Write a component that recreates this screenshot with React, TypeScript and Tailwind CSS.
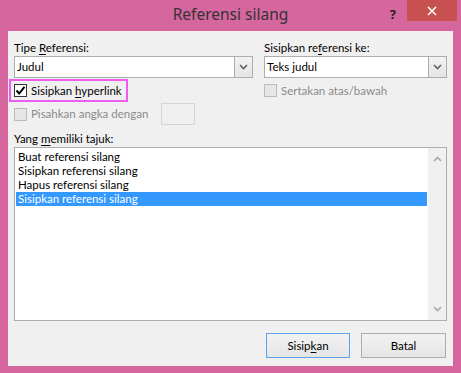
import React from "react";

function Chevron({ up = false, color = "#606060" }: { up?: boolean; color?: string }) {
  return (
    <svg width="9" height="6" viewBox="0 0 9 6" className="block">
      <polyline
        points={up ? "1,5 4.5,1.5 8,5" : "1,1 4.5,4.5 8,1"}
        fill="none"
        stroke={color}
        strokeWidth="1.6"
      />
    </svg>
  );
}

function Combo({ value }: { value: string }) {
  return (
    <div className="flex h-[22px] border border-[#abadb3] bg-white">
      <div className="flex flex-1 items-center pl-[2px] text-black">{value}</div>
      <div className="flex w-[18px] items-center justify-center border-l border-[#acacac] bg-gradient-to-b from-[#f2f2f2] to-[#e5e5e5]">
        <Chevron />
      </div>
    </div>
  );
}

function Box({ checked = false, disabled = false }: { checked?: boolean; disabled?: boolean }) {
  return (
    <div
      className={
        disabled
          ? "h-[13px] w-[13px] shrink-0 border border-[#bcbcbc] bg-[#e6e6e6]"
          : "flex h-[13px] w-[13px] shrink-0 items-center justify-center border border-[#333333] bg-white"
      }
    >
      {checked && (
        <svg width="11" height="11" viewBox="0 0 11 11">
          <polyline points="1.5,5.5 4.2,8.5 9.5,1.8" fill="none" stroke="#000" strokeWidth="2" />
        </svg>
      )}
    </div>
  );
}

const items = [
  "Buat referensi silang",
  "Sisipkan referensi silang",
  "Hapus referensi silang",
  "Sisipkan referensi silang",
];

export default function App() {
  return (
    <div className="relative flex h-[373px] w-[461px] flex-col whitespace-nowrap bg-[#d6669e] px-[8px] pb-[7px] font-['Noto_Sans',sans-serif]">
      {/* title bar */}
      <div className="flex h-[31px] items-center justify-center pb-[1px] text-[15.5px] leading-none text-[#333333]">
        Referensi silang
      </div>
      <div className="absolute right-[65px] top-[5px] text-[13px] font-bold text-[#222]">?</div>
      <div className="absolute right-[4px] top-0 flex h-[21px] w-[50px] items-center justify-center bg-[#c75050]">
        <svg width="10" height="10" viewBox="0 0 10 10">
          <path d="M1 1 L9 9 M9 1 L1 9" stroke="#fff" strokeWidth="1.6" />
        </svg>
      </div>

      {/* client area */}
      <div className="flex flex-1 flex-col bg-[#f0f0f0] px-[6px] pb-[8px] pt-[9px] font-['Lato',sans-serif] text-[11.5px] text-black">
        <div className="flex gap-[11px]">
          <div className="flex w-[239px] flex-col">
            <div className="h-[16px] leading-[16px]">
              Tipe <span className="underline underline-offset-2">R</span>eferensi:
            </div>
            <Combo value="Judul" />
            <div className="-ml-[5px] mt-[1px] flex h-[23px] w-[119px] items-center gap-[4px] border-2 border-[#f05cf0] pl-[3px]">
              <Box checked />
              <span>
                Sisipkan <span className="underline underline-offset-2">h</span>yperlink
              </span>
            </div>
            <div className="mt-[1px] flex h-[22px] items-center">
              <Box disabled />
              <span className="ml-[4px] w-[130px] text-[#8b8b8b]">Pisahkan angka dengan</span>
              <div className="h-[22px] w-[34px] border border-[#d5d5d5] bg-[#f0f0f0]" />
            </div>
          </div>
          <div className="flex w-[183px] flex-col">
            <div className="h-[16px] leading-[16px]">
              Sisipkan re<span className="underline underline-offset-2">f</span>erensi ke:
            </div>
            <Combo value="Teks judul" />
            <div className="mt-[1px] flex h-[23px] items-center gap-[4px]">
              <Box disabled />
              <span className="text-[#8b8b8b]">Sertakan atas/bawah</span>
            </div>
          </div>
        </div>

        <div className="mt-[6px] h-[16px] leading-[16px]">
          Yang <span className="underline underline-offset-2">m</span>emiliki tajuk:
        </div>
        <div className="flex h-[174px] border border-[#abadb3] bg-white">
          <div className="flex-1 px-[1px] pt-[2px]">
            {items.map((t, i) => (
              <div
                key={i}
                className={
                  i === 3
                    ? "h-[14px] bg-[#3399ff] pl-[2px] leading-[14px] text-white"
                    : "h-[14px] pl-[2px] leading-[14px]"
                }
              >
                {t}
              </div>
            ))}
          </div>
          <div className="flex w-[18px] flex-col items-center justify-between bg-[#f0f0f0] py-[8px]">
            <Chevron up color="#a8a8a8" />
            <Chevron color="#a8a8a8" />
          </div>
        </div>

        <div className="mr-[1px] mt-[12px] flex h-[25px] justify-end gap-[11px]">
          <div className="flex w-[84px] items-center justify-center border border-[#5aa5ee] bg-gradient-to-b from-[#f2f2f2] to-[#e5e5e5]">
            Sisip<span className="underline underline-offset-2">k</span>an
          </div>
          <div className="flex w-[85px] items-center justify-center border border-[#acacac] bg-gradient-to-b from-[#f2f2f2] to-[#e5e5e5]">
            Batal
          </div>
        </div>
      </div>
    </div>
  );
}
